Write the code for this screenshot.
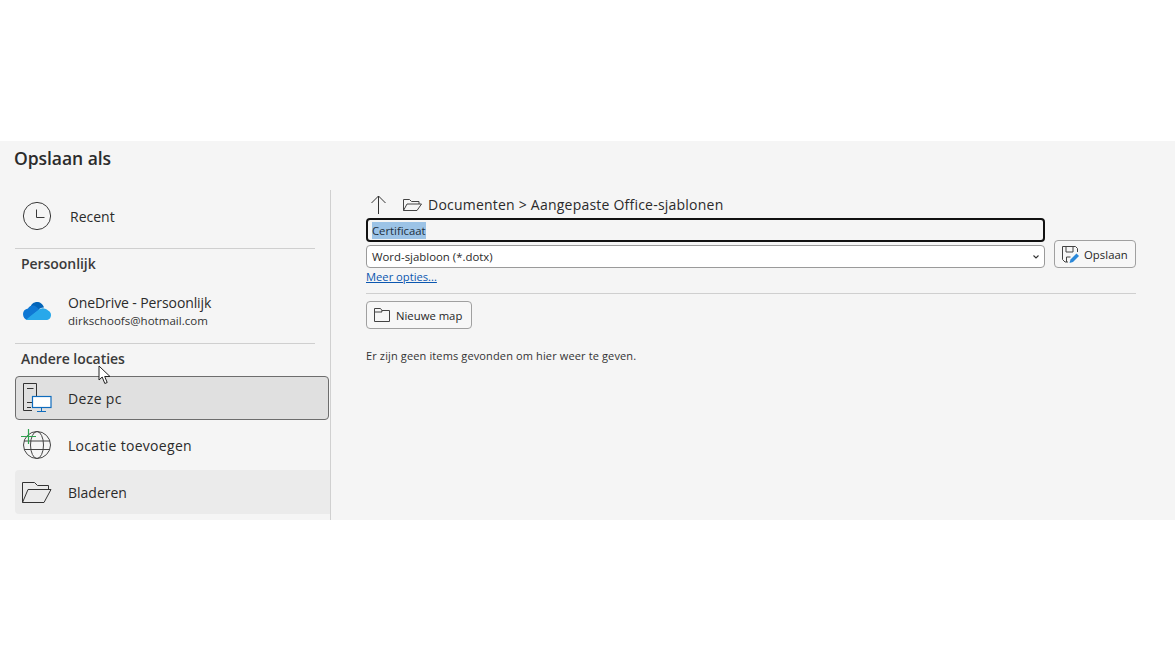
<div class="page">
  <section class="panel">
    <h1>Opslaan als</h1>
    <div class="columns">
      <aside class="side">
        <div class="item recent">
          <span class="ico">
            <svg width="30" height="30" viewBox="0 0 30 30"><circle cx="15" cy="15" r="13.600" fill="none" stroke="#3a3a3a" stroke-width="1"/><path d="M14.500 8.500v8h8" fill="none" stroke="#3a3a3a" stroke-width="1"/></svg>
          </span>
          <span class="label recent-label">Recent</span>
        </div>
        <hr class="rule r1" />
        <h2>Persoonlijk</h2>
        <div class="item onedrive">
          <span class="ico od">
            <svg width="28" height="18" viewBox="0 0 28 18">
              <path d="M7 6C8 2 11 0 14 0c3 0 6 2 7 5.500-3 0-5 1-6 3z" fill="#0364b8"/>
              <path d="M0 12c0-3 2-5 5-5.500C6 4 9 3 11 3.500 13 4 15 6 16 8L4 18C2 17.500 0 15 0 12z" fill="#0f78d4"/>
              <path d="M3 18C6 15 10 12 14 9 17 6.500 19 6 21 6.500 24 7 25 8.500 25 8.500 27 9.500 28 11 28 13 28 16 26 18 23 18z" fill="#28a8ea"/>
            </svg>
          </span>
          <span class="stack">
            <span class="label od-label">OneDrive - Persoonlijk</span>
            <span class="sub">dirkschoofs@hotmail.com</span>
          </span>
        </div>
        <hr class="rule r2" />
        <h2 class="h-other">Andere locaties</h2>
        <div class="item selected">
          <span class="ico pc">
            <svg width="30" height="30" viewBox="0 0 30 30" fill="none">
              <path d="M9 27.500H.5V.5H13.500v13" stroke="#333" stroke-width="1"/>
              <path d="M4 5.500h6.500M4 19.500h5M4 24.500h4" stroke="#333"/>
              <rect x="9.500" y="13.500" width="18.500" height="11" fill="#fff" stroke="#0f6cbd" stroke-width="1.200"/>
              <path d="M18.500 25v3.500M14 28.500h9" stroke="#0f6cbd"/>
            </svg>
          </span>
          <span class="label pc-label">Deze pc</span>
        </div>
        <div class="item">
          <span class="ico globe">
            <svg width="32" height="32" viewBox="0 0 32 32" fill="none">
              <circle cx="16" cy="16" r="13.500" stroke="#444"/>
              <ellipse cx="16" cy="16" rx="6.500" ry="13.500" stroke="#444"/>
              <path d="M3 12h26M3 20.500h26" stroke="#444"/>
              <path d="M7.500 0v15M0 7.500h15" stroke="#2ea44f" stroke-width="1.200"/>
            </svg>
          </span>
          <span class="label wide">Locatie toevoegen</span>
        </div>
        <div class="item browse">
          <span class="ico">
            <svg width="30" height="21" viewBox="0 0 30 21" fill="none" stroke="#333">
              <path d="M.5 20.500V.5h12l3 3h11v4"/>
              <path d="M.5 20.500h21.500L29 7.500H6z"/>
            </svg>
          </span>
          <span class="label">Bladeren</span>
        </div>
      </aside>

      <main class="main">
        <div class="crumbs">
          <svg class="up" width="15" height="19" viewBox="0 0 15 19" fill="none" stroke="#333"><path d="M7.500 19V1M.5 8l7-7 7 7"/></svg>
          <svg class="open" width="19" height="12" viewBox="0 0 19 12" fill="none" stroke="#444"><path d="M.5 11.500V.5h6l2 2h7.500v2.500"/><path d="M.5 11.500h13.500L18.500 5H4z"/></svg>
          <span>Documenten &gt; Aangepaste Office-sjablonen</span>
        </div>
        <div class="form">
          <div class="fields">
            <div class="name"><span class="sel">Certificaat</span></div>
            <div class="type">
              <span>Word-sjabloon (*.dotx)</span>
              <svg width="6" height="4" viewBox="0 0 6 4" fill="none" stroke="#333" stroke-width="1.100"><path d="M.5.500l2.500 2.500 2.500-2.500"/></svg>
            </div>
          </div>
          <button class="btn save">
            <svg width="17" height="17" viewBox="0 0 17 17" fill="none">
              <path d="M6 16H3L.5 13.500V.5h13l2 2V6" stroke="#444"/>
              <path d="M4 1v5h7V1M4.500 16v-5h4" stroke="#444"/>
              <path d="M7.500 17l1-3.500 6-6 2.500 2.500-6 6z" fill="#2b88d8"/>
            </svg>
            Opslaan
          </button>
        </div>
        <a class="more" href="#more">Meer opties...</a>
        <hr class="rule main-rule" />
        <button class="btn newfolder">
          <svg width="16" height="14" viewBox="0 0 16 14" fill="none" stroke="#444"><path d="M.5 13.500V.5h6l1.500 2h7.500v11zM.5 4h7.500l-.5-1.500"/></svg>
          Nieuwe map
        </button>
        <p class="empty">Er zijn geen items gevonden om hier weer te geven.</p>
      </main>
    </div>
    <svg class="cursor" width="14" height="20" viewBox="0 0 14 20"><path d="M1 1v14l3.200-3 2.600 6.500 2.400-1-2.500-6H12z" fill="#fff" stroke="#222" stroke-width="1"/></svg>
  </section>
</div>

<style>
  :global(body) { margin: 0; background: #fff; }
  .page { height: 661px; padding-top: 141px; box-sizing: border-box; font-family: "Open Sans", "Noto Sans", sans-serif; color: #2a2a2a; }
  .panel { position: relative; height: 379px; background: #f5f5f5; overflow: hidden; }
  h1 { margin: 0; padding: 6px 0 0 14px; height: 43px; box-sizing: border-box; font-size: 17.500px; line-height: 23px; font-weight: 600; color: #2b2b2b; letter-spacing: -.05px; }
  .columns { display: flex; height: 336px; margin-top: 6px; }
  .side { width: 315px; margin-left: 15px; border-right: 1px solid #d0d0d0; flex: none; }
  .item { display: flex; align-items: center; height: 44px; width: 314px; box-sizing: border-box; border-radius: 4px; }
  .ico { width: 53px; padding-left: 7px; box-sizing: border-box; display: flex; align-items: center; flex: none; }
  .od { padding-left: 8px; }
  .pc { width: 52px; padding-left: 7px; }
  .globe { padding-left: 6px; }
  .recent { margin-top: 4px; }
  .recent-label { margin-left: 2px; letter-spacing: .05px; }
  .label { font-size: 14px; line-height: 18px; color: #2b2b2b; letter-spacing: 0; padding-top: 1px; }
  .od-label { padding-top: 2px; letter-spacing: -.1px; }
  .pc-label { letter-spacing: .35px; }
  .wide { letter-spacing: .3px; }
  .stack { display: flex; flex-direction: column; }
  .sub { font-size: 11.500px; line-height: 17px; letter-spacing: .03px; color: #333; }
  .rule { border: 0; height: 1px; background: #cfcfcf; margin: 0; }
  .r1 { width: 300px; margin-top: 10px; }
  h2 { margin: 0; padding-left: 6px; font-size: 14px; line-height: 20px; height: 30px; font-weight: 600; color: #3a3a3a; margin-top: 5px; letter-spacing: -.05px; }
  .onedrive { height: 47px; margin-top: 3px; }
  .r2 { width: 300px; margin-top: 9px; }
  .h-other { margin-top: 5px; height: 27px; }
  .selected { background: #e0e0e0; border: 1px solid #6d6d6d; }
  .selected + .item { margin-top: 3px; }
  .browse { background: #ebebeb; width: 315px; margin-top: 3px; border-radius: 4px 0 0 4px; }
  .main { width: 770px; margin-left: 35px; display: flex; flex-direction: column; }
  .crumbs { display: flex; align-items: center; height: 27px; font-size: 14px; color: #2b2b2b; margin-top: 1px; letter-spacing: .22px; }
  .up { margin-left: 5px; }
  .open { margin-left: 17px; margin-right: 6px; }
  .form { display: flex; gap: 9px; align-items: flex-end; }
  .fields { width: 679px; display: flex; flex-direction: column; gap: 3px; }
  .name { height: 24px; box-sizing: border-box; border: 2px solid #111; border-radius: 4px; padding: 2px 4px; font-size: 11.300px; line-height: 17px; background: #f5f5f5; }
  .sel { background: #9cc3e6; display: inline-block; color: #1c2f40; }
  .type { height: 23px; box-sizing: border-box; border: 1px solid #9a9a9a; border-radius: 4px; background: #fff; padding: 0 5px 0 5px; display: flex; align-items: center; justify-content: space-between; font-size: 11.400px; }
  .btn { display: flex; align-items: center; background: #f7f7f7; border: 1px solid #a0a0a0; border-radius: 4px; font: inherit; font-size: 11.300px; color: #262626; padding: 0; box-sizing: border-box; }
  .save { width: 82px; height: 28px; padding-left: 7px; gap: 5px; letter-spacing: .05px; }
  .more { font-size: 11.200px; line-height: 16px; color: #0b57b0; margin-top: 1px; align-self: flex-start; }
  .main-rule { margin-top: 8px; }
  .newfolder { width: 106px; height: 28px; padding-left: 7px; gap: 6px; margin-top: 7px; }
  .empty { margin: 19px 0 0; font-size: 11px; line-height: 16px; color: #333; letter-spacing: .13px; }
  .cursor { position: absolute; left: 98px; top: 224px; }
</style>
